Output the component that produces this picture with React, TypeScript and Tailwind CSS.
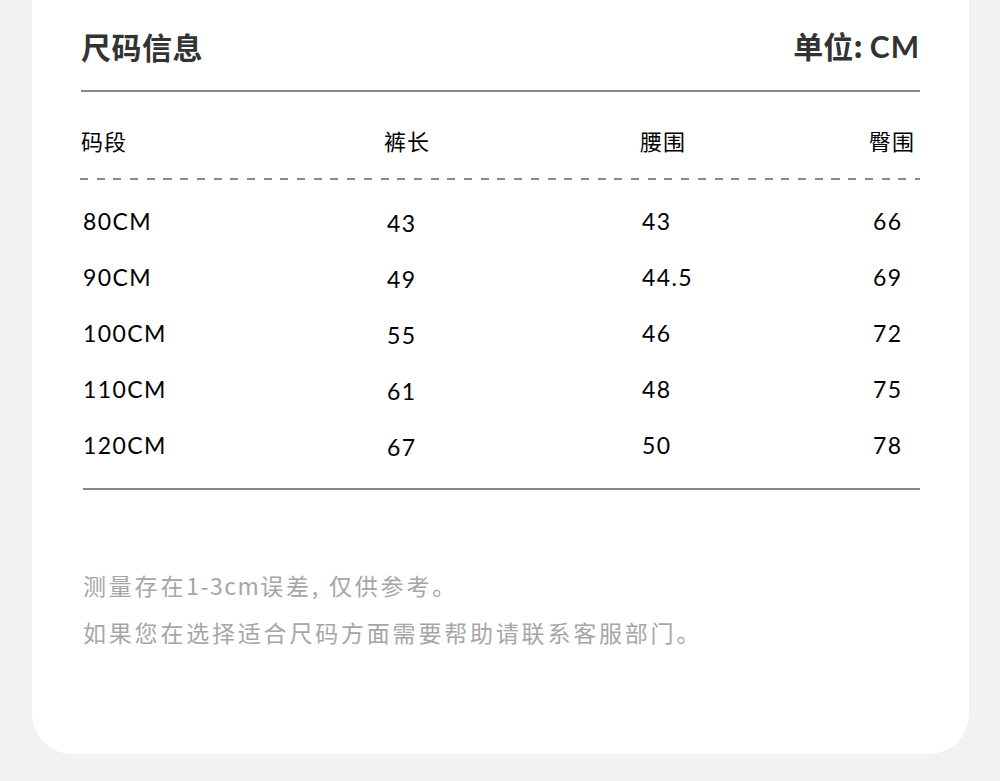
const rows = [
  ["80CM", "43", "43", "66"],
  ["90CM", "49", "44.5", "69"],
  ["100CM", "55", "46", "72"],
  ["110CM", "61", "48", "75"],
  ["120CM", "67", "50", "78"],
];

const cjk = "font-['Noto_Sans_CJK_SC',sans-serif]";
const num = "font-['Lato','Noto_Sans_CJK_SC',sans-serif]";

export default function App() {
  return (
    <div className="min-h-[781px] w-[1000px] bg-[#f2f2f2]">
      <div className="ml-[32px] h-[754px] w-[937px] rounded-b-[40px] bg-white pl-[49px] pr-[49px]">
        <div className="flex h-[90px] items-center justify-between pt-[2px] text-[#333]">
          <h1 className={`${cjk} text-[30px] font-bold tracking-[0.5px]`}>尺码信息</h1>
          <div className={`${cjk} text-[30px] font-bold`}>
            单位:&nbsp;<span className="font-['Lato',sans-serif] font-bold tracking-[1px]">CM</span>
          </div>
        </div>
        <div className="h-[2px] bg-[#888]" />

        <div className={`${cjk} flex h-[86px] items-center pt-[10px] text-[22px] tracking-[1px] text-black`}>
          <div className="w-[303px]">码段</div>
          <div className="w-[256px]">裤长</div>
          <div className="w-[229px]">腰围</div>
          <div>臀围</div>
        </div>
        <div className="ml-[-1px] h-[1.5px] bg-[repeating-linear-gradient(to_right,#8a8a8a_0,#8a8a8a_8px,transparent_8px,transparent_16.7px)]" />

        <div className={`${num} pt-[14px] text-[23px] tracking-[1.4px] text-black`}>
          {rows.map((r) => (
            <div key={r[0]} className="flex h-[56px] items-center">
              <div className="w-[303px] pl-[2px]">{r[0]}</div>
              <div className="w-[256px] pl-[3px] pt-[4px]">{r[1]}</div>
              <div className="w-[229px] pl-[2px]">{r[2]}</div>
              <div className="pl-[4px]">{r[3]}</div>
            </div>
          ))}
        </div>
        <div className="ml-[2px] mt-[14px] h-[2px] bg-[#888]" />

        <div className={`${cjk} ml-[2px] mt-[72px] text-[23px] font-normal leading-[47px] tracking-[2.8px] text-[#a6a6a6]`}>
          <p>
            测量存在<span className="tracking-[1.5px]">1-3cm</span>误差, 仅供参考。
          </p>
          <p>如果您在选择适合尺码方面需要帮助请联系客服部门。</p>
        </div>
      </div>
    </div>
  );
}
